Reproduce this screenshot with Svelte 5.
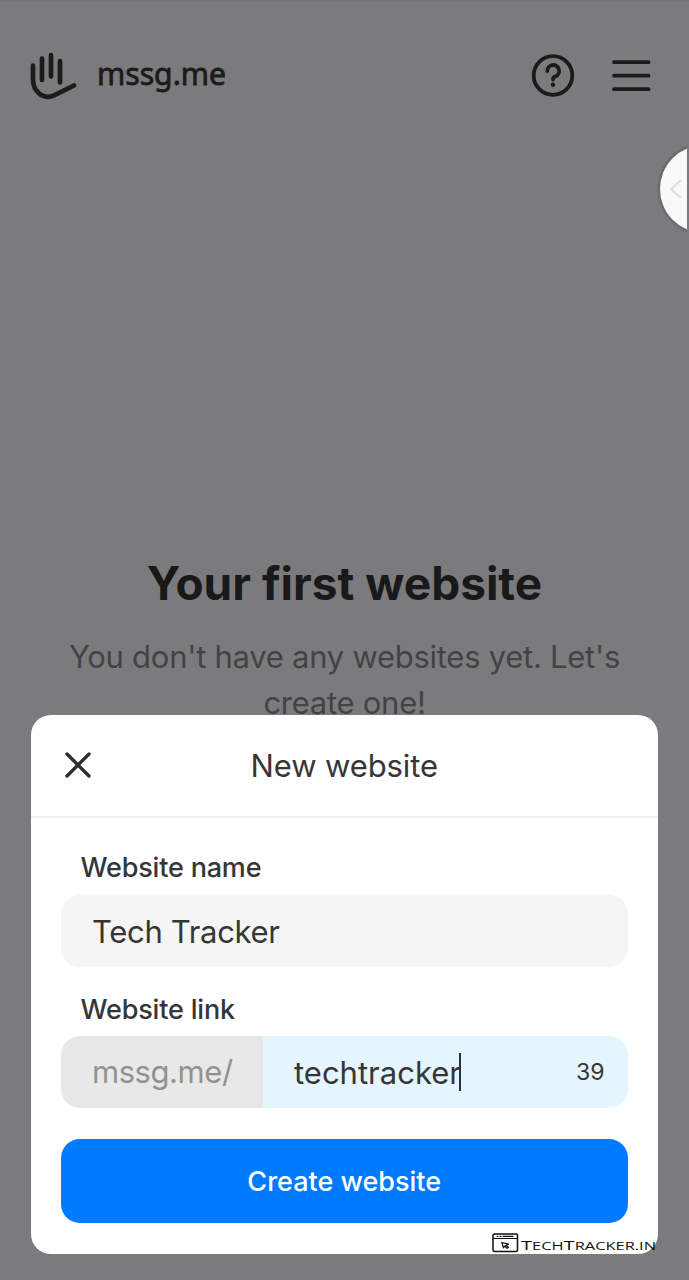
<script>
  const siteName = 'Tech Tracker';
  const slug = 'techtracker';
  const remaining = 39;
</script>

<div class="page">
  <header>
    <div class="brand">
      <svg class="hand" width="50" height="50" viewBox="0 0 50 50">
        <path d="M4 14.500V28C4 41 14.500 49 25 44.300L45 34.500M13 7.500V29M22 4.200V25.500M31 10.200V31.500" />
      </svg>
      <svg class="word" width="134" height="60" viewBox="0 0 134 60">
        <text x="2" y="39" textLength="129" lengthAdjust="spacingAndGlyphs">mssg.me</text>
      </svg>
    </div>
    <div class="actions">
      <svg width="44" height="44" viewBox="0 0 44 44">
        <circle cx="22" cy="21.500" r="19.300" />
        <path d="M16.300 17.100A5.900 5.900 0 1 1 24.600 22.300C22.700 23.200 22 24 22 25.500" />
        <circle class="dot" cx="22" cy="30.700" r="2.200" />
      </svg>
      <svg width="40" height="34" viewBox="0 0 40 34">
        <path d="M3 3.200H37.500M3 16.700H37.500M3 30.200H37.500" />
      </svg>
    </div>
  </header>

  <main>
    <h1>Your first website</h1>
    <p>You don't have any websites yet. Let's<br />create one!</p>
  </main>

  <div class="handle">
    <svg width="30" height="90" viewBox="0 0 30 90">
      <circle class="rim" cx="47" cy="45" r="46.500" />
      <circle class="disc" cx="47" cy="45" r="44" />
      <path d="M23 37L14 45L23 53" />
    </svg>
  </div>

  <section class="modal">
    <div class="head">
      <svg class="close" width="28" height="28" viewBox="0 0 28 28"><path d="M3 3L25 25M25 3L3 25" /></svg>
      <h2>New website</h2>
    </div>
    <div class="form">
      <span class="label">Website name</span>
      <div class="field">{siteName}</div>
      <span class="label second">Website link</span>
      <div class="link">
        <div class="prefix">mssg.me/</div>
        <div class="slug"><span class="typed">{slug}</span><i class="caret"></i><span class="count">{remaining}</span></div>
      </div>
      <button>Create website</button>
    </div>
  </section>

  <svg class="mark" width="168" height="24" viewBox="0 0 168 24">
    <rect x="2" y="3" width="24.500" height="17.500" rx="1.500" />
    <path class="thin" d="M2 7.500H26.500M12 5.300H22M6 5.300H7M9 5.300H10" />
    <path class="thin" d="M10.800 11.500L17.500 13.200L15 14.200L17.500 16.500L16 17.300L13.800 15L12.500 16.800Z" />
    <text x="30" y="19" textLength="135" lengthAdjust="spacingAndGlyphs">T<tspan class="small">ECH</tspan>T<tspan class="small">RACKER.IN</tspan></text>
  </svg>
</div>

<style>
  :global(body) {
    margin: 0;
    background: #7b7b7d;
  }
  .page {
    position: relative;
    box-sizing: border-box;
    width: 689px;
    height: 1280px;
    overflow: hidden;
    background: #7b7b7d;
    border-top: 1px solid #757577;
    font-family: Inter, "Liberation Sans", sans-serif;
    color: #363638;
  }
  svg {
    display: block;
    fill: none;
    stroke: #1b1b1c;
    stroke-linecap: round;
    stroke-linejoin: round;
  }
  header {
    display: flex;
    justify-content: space-between;
    align-items: center;
    height: 150px;
    padding: 0 38px 0 29px;
  }
  .brand {
    display: flex;
    align-items: center;
    gap: 16px;
  }
  .hand {
    stroke-width: 4.7;
  }
  .word text {
    font: 400 31px "Noto Sans", sans-serif;
    fill: #1b1b1c;
    stroke-width: 0.8;
  }
  .actions {
    display: flex;
    align-items: center;
    gap: 36px;
  }
  .actions svg {
    stroke-width: 3.8;
  }
  .actions .dot {
    fill: #1b1b1c;
    stroke: none;
  }
  main {
    padding-top: 401.5px;
    text-align: center;
  }
  h1 {
    margin: 0;
    font-size: 46px;
    line-height: 60px;
    font-weight: 700;
    color: #19191a;
  }
  p {
    margin: 21px 0 0;
    font-size: 31px;
    line-height: 46px;
    letter-spacing: -0.27px;
    color: #434345;
  }
  .handle {
    position: absolute;
    top: 143px;
    right: 2px;
  }
  .handle svg {
    stroke: #dedede;
    stroke-width: 2.2;
  }
  .handle .rim {
    fill: #6c6c6e;
    stroke: none;
  }
  .handle .disc {
    fill: #f9f9f9;
    stroke: none;
  }
  .modal {
    position: absolute;
    left: 30.5px;
    top: 713.5px;
    width: 627.5px;
    height: 539.5px;
    border-radius: 20px;
    background: #fff;
  }
  .head {
    display: grid;
    grid-template-columns: 1fr auto 1fr;
    align-items: center;
    height: 101.5px;
    border-bottom: 2px solid #f0f0f0;
  }
  .close {
    margin-left: 33.5px;
    stroke: #2f2f2f;
    stroke-width: 3.4;
  }
  h2 {
    margin: 0;
    font-size: 31px;
    font-weight: 400;
    letter-spacing: -0.1px;
  }
  .form {
    display: flex;
    flex-direction: column;
    padding: 32px 30.5px 0;
  }
  .label {
    padding-left: 19.5px;
    font-size: 27px;
    line-height: 36px;
    font-weight: 500;
    letter-spacing: -0.18px;
  }
  .second {
    margin-top: 25px;
  }
  .field {
    box-sizing: border-box;
    height: 72px;
    margin-top: 9px;
    padding-left: 31px;
    border-radius: 19px;
    background: #f5f5f5;
    font-size: 31px;
    line-height: 73px;
    letter-spacing: -0.32px;
  }
  .link {
    display: flex;
    height: 72px;
    margin-top: 8px;
    border-radius: 19px;
    overflow: hidden;
    font-size: 31px;
    line-height: 72px;
  }
  .prefix {
    box-sizing: border-box;
    width: 202px;
    padding-left: 31px;
    background: #e8e8e8;
    color: #929292;
    letter-spacing: -0.45px;
  }
  .slug {
    flex: 1;
    display: flex;
    align-items: center;
    padding: 0 23px 0 31px;
    background: #e4f5fe;
  }
  .typed {
    line-height: 70px;
    padding-top: 2px;
  }
  .caret {
    width: 2px;
    height: 38px;
    margin-left: -2px;
    background: #263238;
  }
  .count {
    margin-left: auto;
    font-size: 23px;
  }
  button {
    height: 84px;
    margin-top: 31px;
    padding: 0;
    border: 0;
    border-radius: 19px;
    background: #007aff;
    color: #fff;
    font: 500 27px Inter, sans-serif;
  }
  .mark {
    position: absolute;
    left: 491px;
    top: 1230px;
    stroke: #111;
    stroke-width: 1.5;
  }
  .mark .thin {
    stroke-width: 1.2;
  }
  .mark text {
    font: 400 13.5px "Open Sans", sans-serif;
    fill: #111;
    stroke: none;
  }
  .mark .small {
    font-size: 11px;
  }
</style>
